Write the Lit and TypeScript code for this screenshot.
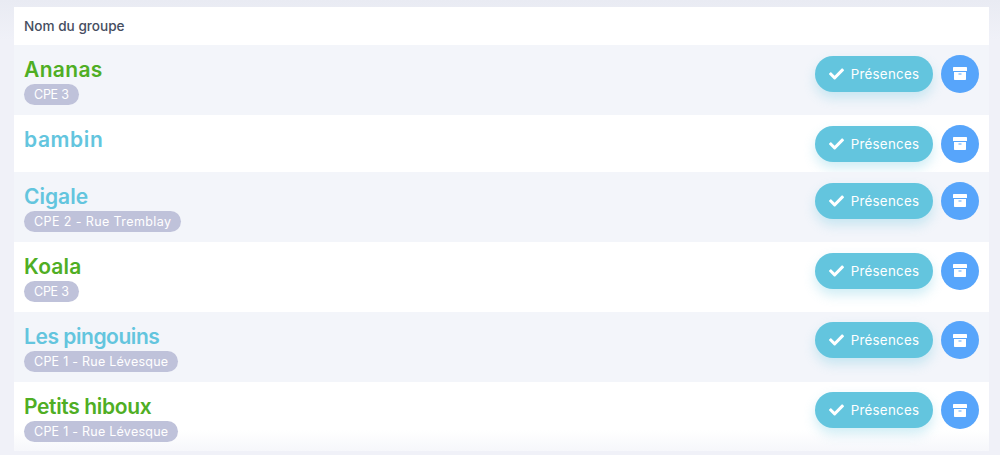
import { LitElement, html, css } from "lit";
import { customElement } from "lit/decorators.js";

const rows = [
  { name: "Ananas", color: "green", tag: "CPE 3", nameLs: 0.35, tagLs: -0.25 },
  { name: "bambin", color: "blue", tag: "", nameLs: 0.6, tagLs: 0 },
  { name: "Cigale", color: "blue", tag: "CPE 2 - Rue Tremblay", nameLs: 0, tagLs: 0.4 },
  { name: "Koala", color: "green", tag: "CPE 3", nameLs: 0.2, tagLs: -0.25 },
  { name: "Les pingouins", color: "blue", tag: "CPE 1 - Rue Lévesque", nameLs: -0.45, tagLs: 0.25 },
  { name: "Petits hiboux", color: "green", tag: "CPE 1 - Rue Lévesque", nameLs: -0.35, tagLs: 0.25 },
];

@customElement("app-root")
export class AppRoot extends LitElement {
  static styles = css`
    :host {
      display: block;
      height: 455px;
      overflow: hidden;
      background: linear-gradient(#e9ebf3, #f0f1f8 40px);
      font-family: Inter, "Noto Sans", sans-serif;
    }
    .card {
      margin: 0 11px 0 14px;
      padding-top: 7px;
      display: flex;
      flex-direction: column;
    }
    .head {
      height: 38.49px;
      background: #fff;
      display: flex;
      align-items: center;
      padding-left: 10px;
      font-size: 13.6px;
      font-weight: 500;
      color: #464e5f;
    }
    .row {
      height: 69.8px;
      display: flex;
      align-items: flex-start;
      justify-content: space-between;
      padding: 9.51px 10px 0;
      background: #fff;
      box-sizing: border-box;
    }
    .row.odd { background: #f3f5fa; }
    .row.short { height: 57px; }
    .row.last { background: linear-gradient(#fff 70%, #f6f7fb); }
    .info {
      display: flex;
      flex-direction: column;
      align-items: flex-start;
      padding-top: 3.5px;
    }
    .name {
      font-size: 21px;
      font-weight: 600;
      line-height: 24px;
    }
    .name.green { color: #4fae24; }
    .name.blue { color: #63c5de; }
    .tag {
      margin-top: 2px;
      height: 21px;
      line-height: 21px;
      padding: 0 10px;
      border-radius: 11px;
      background: #bfc2da;
      color: #fff;
      font-size: 12.5px;
      white-space: nowrap;
    }
    .actions { display: flex; align-items: center; gap: 8px; }
    .pres {
      width: 118px;
      height: 36px;
      box-sizing: border-box;
      border-radius: 18px;
      background: #63c5de;
      color: #fff;
      display: flex;
      align-items: center;
      justify-content: center;
      gap: 7px;
      font-size: 13.3px;
      letter-spacing: 0.3px;
      box-shadow: 0 6px 12px rgba(99, 197, 222, 0.3);
    }
    .pres svg { width: 15px; height: 12px; fill: #fff; }
    .arch {
      width: 38px;
      height: 38px;
      border-radius: 50%;
      background: #57a5fb;
      display: flex;
      align-items: center;
      justify-content: center;
    }
    .arch svg { width: 14px; height: 13px; fill: #fff; }
  `;

  render() {
    return html`
      <div class="card">
        <div class="head">Nom du groupe</div>
        ${rows.map(
          (r, i) => html`
            <div class="row ${i % 2 === 0 ? "odd" : ""} ${r.tag ? "" : "short"} ${i === 5 ? "last" : ""}">
              <div class="info">
                <div class="name ${r.color}" style="letter-spacing:${r.nameLs}px">${r.name}</div>
                ${r.tag ? html`<div class="tag" style="letter-spacing:${r.tagLs}px">${r.tag}</div>` : ""}
              </div>
              <div class="actions">
                <div class="pres">
                  <svg viewBox="0 0 512 400"><path d="M174 384 7 217c-10-10-10-26 0-36l36-36c10-10 26-10 36 0l113 112L433 16c10-10 26-10 36 0l36 36c10 10 10 26 0 36L210 384c-10 10-26 10-36 0z"/></svg>
                  <span>Présences</span>
                </div>
                <div class="arch">
                  <svg viewBox="0 0 14 13"><path fill-rule="evenodd" d="M0 .7A.7.7 0 0 1 .7 0h12.6a.7.7 0 0 1 .7.7V4H0zM1 5h12v7.3a.7.7 0 0 1-.7.7H1.7a.7.7 0 0 1-.7-.7zm4.5 1.6v1h3v-1z"/></svg>
                </div>
              </div>
            </div>
          `
        )}
      </div>
    `;
  }
}
